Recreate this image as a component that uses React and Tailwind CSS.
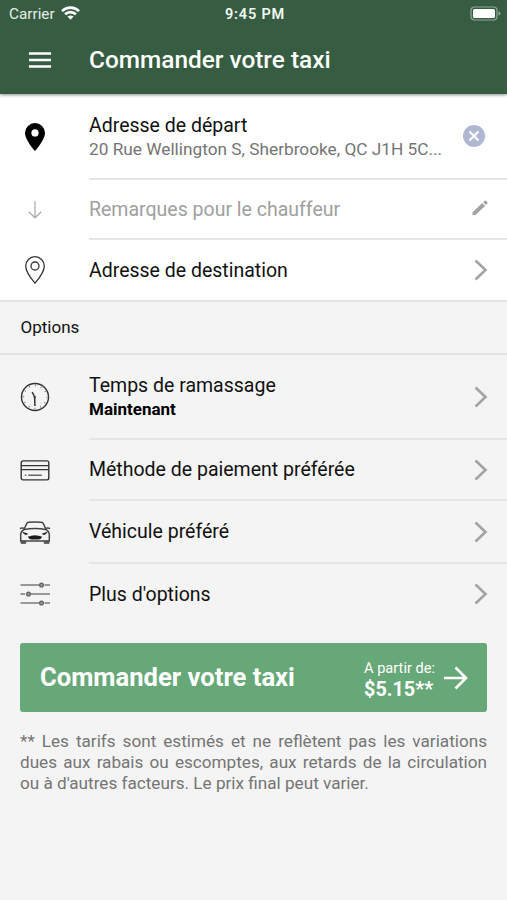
const chevron = (
  <svg width="14" height="22" viewBox="0 0 14 22" fill="none" stroke="#a3a3a3" strokeWidth="2.6">
    <path d="M1.5 1.5 11.5 11 1.5 20.5" />
  </svg>
);

function StatusBar() {
  return (
    <div className="flex h-[28px] items-center text-[15.3px] text-[#e6ede8]">
      <div className="flex flex-1 items-center gap-[6px] pl-[9px]">
        <span>Carrier</span>
        <svg className="mb-[2px]" width="19" height="14" viewBox="0 0 19 14" fill="none" stroke="#fff" strokeWidth="2.7">
          <path d="M1 5.1C5.7.5 13.3.5 18 5.1" />
          <path d="M4.1 8.2c3-2.9 7.8-2.9 10.8 0" />
          <path d="m9.5 13.8-3-3.2c1.7-1.5 4.3-1.5 6 0z" fill="#fff" stroke="none" />
        </svg>
      </div>
      <span className="pt-[2px] text-[14.5px] font-semibold tracking-[0.8px] text-[#f4f8f5]">9:45 PM</span>
      <div className="flex flex-1 justify-end pr-[6px] pb-[2px]">
        <svg width="31" height="15" viewBox="0 0 31 15">
          <rect x="1" y="1" width="26" height="13" rx="3.5" fill="none" stroke="#8fa897" strokeWidth="1.2" />
          <rect x="3" y="3" width="22" height="9" rx="1.5" fill="#fff" />
          <path d="M28.5 5.2v4.6q2-.8 2-2.3t-2-2.3" fill="#8fa897" />
        </svg>
      </div>
    </div>
  );
}

function Header() {
  return (
    <header className="relative h-[94px] bg-[#365d42] shadow-[0_1px_3px_rgba(0,0,0,0.45)]">
      <StatusBar />
      <div className="flex h-[64px] items-center pl-[29px]">
        <svg width="22" height="16" viewBox="0 0 22 16" stroke="#fff" strokeWidth="2.5">
          <path d="M0 1.5h22M0 8h22M0 14.5h22" />
        </svg>
        <h1 className="ml-[38px] text-[24.4px] font-medium text-white">Commander votre taxi</h1>
      </div>
    </header>
  );
}

function Row({ icon, right, height, last, children }) {
  return (
    <div className={`flex ${height}`}>
      <div className="flex w-[70px] items-center justify-center">{icon}</div>
      <div
        className={`ml-[19px] flex min-w-0 flex-1 items-center justify-between pr-[19px] text-[19.5px] leading-[24px] ${
          last ? "" : "border-b-2 border-[#e5e5e5]"
        }`}
      >
        {children}
        {right}
      </div>
    </div>
  );
}

const pinFilled = (
  <svg width="20" height="28" viewBox="0 0 20 28">
    <path
      fillRule="evenodd"
      d="M10 0a10 10 0 0 0-10 10c0 7 10 18 10 18s10-11 10-18A10 10 0 0 0 10 0m0 6.3a3.6 3.6 0 1 1 0 7.2 3.6 3.6 0 0 1 0-7.2"
    />
  </svg>
);

const arrowDown = (
  <svg width="14" height="18" viewBox="0 0 14 18" fill="none" stroke="#aaa" strokeWidth="1.2">
    <path d="M7 0v16.5M.8 10.8 7 16.8l6.2-6" />
  </svg>
);

const pinOutline = (
  <svg width="20" height="28" viewBox="0 0 20 28" fill="none" stroke="#333" strokeWidth="1.3">
    <path d="M10 .7A9.3 9.3 0 0 0 .7 10C.7 16.3 10 27.2 10 27.2S19.3 16.3 19.3 10A9.3 9.3 0 0 0 10 .7z" />
    <circle cx="10" cy="10" r="4" />
  </svg>
);

const clock = (
  <svg className="mb-[2px]" width="30" height="30" viewBox="0 0 30 30" fill="none" stroke="#333">
    <circle cx="15" cy="15" r="13.5" strokeWidth="1.4" />
    <circle cx="15" cy="15" r="11.5" stroke="#666" strokeWidth="1.4" strokeDasharray="0.9 5.121" strokeDashoffset="0.45" />
    <path d="m12.2 10 2.4 5 .4 9" strokeWidth="1.5" />
    <circle cx="14.8" cy="15.2" r="1.1" fill="#333" stroke="none" />
  </svg>
);

const card = (
  <svg width="30" height="21" viewBox="0 0 30 21" fill="none" stroke="#333" strokeWidth="1.4">
    <rect x="1.2" y=".9" width="27.6" height="19" rx="1.8" />
    <path d="M1.2 5.6h27.6M1.2 9.6h27.6" />
    <path d="M4.8 15.2h1.5M8.3 15.2h13.5" stroke="#666" />
  </svg>
);

const car = (
  <svg width="32" height="24" viewBox="0 0 32 24" fill="none" stroke="#444" strokeWidth="1.5">
    <path d="M5 8.5 7.6 2.8Q8.2 1.5 9.8 1.3q6.2-.8 12.4 0 1.6.2 2.2 1.5L27 8.5" />
    <path d="M5 8.5Q16 6.6 27 8.5M4.8 7.2Q2.5 6.4 1 7.6M27.2 7.2q2.3-.8 3.8.4" />
    <path d="M5 8.5Q2 10.3 1.7 13v7h28.6v-7Q30 10.3 27 8.5" />
    <path d="M2 20h4.8v2.5H2zM25.2 20H30v2.5h-4.8z" fill="#555" stroke="#555" strokeWidth=".7" />
    <path d="m4 11.4 4.5 1.5-2.3.7zM28 11.4l-4.5 1.5 2.3.7z" fill="#222" stroke="#222" strokeWidth=".9" />
    <path d="M8.8 15.8q7.2-3 14.4 0-1.4 2.6-3.3 2.6h-7.8q-1.9 0-3.3-2.6" fill="#1a1a1a" stroke="none" />
  </svg>
);

const sliders = (
  <svg width="30" height="24" viewBox="0 0 30 24" fill="none" stroke="#7a7a7a" strokeWidth="1.7">
    <path d="M.5 3H19M24.5 3H30M.5 12H5M11 12H30M.5 21H19M24.5 21H30" />
    <g fill="#aaa" stroke="#666" strokeWidth="1.5">
      <circle cx="21.5" cy="3" r="1.8" />
      <circle cx="8.500" cy="12" r="1.800" />
      <circle cx="21.500" cy="21" r="1.800" />
    </g>
  </svg>
);

const clear = (
  <svg className="mr-[3px]" width="22" height="22" viewBox="0 0 22 22">
    <circle cx="11" cy="11" r="11" fill="#b0b7d2" />
    <path d="m6.5 6.5 9 9M15.5 6.5l-9 9" stroke="#fff" strokeWidth="2.3" />
  </svg>
);

const pencil = (
  <svg className="mb-[2px]" width="16" height="16" viewBox="0 0 16 16" fill="#a3a3a3">
    <path d="M.5 12.3 10.3 3l2.8 2.9-9.7 9.2H.5zM11.2 2.2l1.5-1.4q.7-.6 1.4 0l1.3 1.4q.6.7 0 1.300L14 5z" />
  </svg>
);

function OrderButton() {
  return (
    <button className="flex h-[69px] w-full items-center rounded-[3px] bg-[#67a878] pl-[20px] pr-[19px] text-left text-white">
      <span className="flex-1 text-[25.6px] font-bold">Commander votre taxi</span>
      <span className="flex flex-col pt-[4px]">
        <span className="text-[14.6px] leading-[21px]">A partir de:</span>
        <span className="text-[19.8px] font-bold leading-[22px]">$5.15**</span>
      </span>
      <svg className="ml-[9px]" width="24" height="24" viewBox="0 0 24 24" fill="none" stroke="#fff" strokeWidth="2.6">
        <path d="M0 12h22M11.5 1.5 22 12 11.5 22.5" />
      </svg>
    </button>
  );
}

export default function App() {
  return (
    <div className="h-[900px] w-[507px] overflow-hidden bg-[#f4f4f4] font-['Roboto',sans-serif] text-[#111]">
      <Header />
      <section className="border-b-2 border-[#e3e3e3] bg-white">
        <Row height="h-[86px]" icon={pinFilled} right={clear}>
          <div className="w-[356px] pt-[2px]">
            <div className="pt-[1px] leading-[23px]">Adresse de départ</div>
            <div className="truncate text-[17.25px] text-[#757575]">20 Rue Wellington S, Sherbrooke, QC J1H 5C...</div>
          </div>
        </Row>
        <Row height="h-[60px]" icon={arrowDown} right={pencil}>
          <span className="pt-[2px] text-[#a0a0a0]">Remarques pour le chauffeur</span>
        </Row>
        <Row height="h-[60px]" icon={pinOutline} right={chevron} last>
          <span className="pt-[2px]">Adresse de destination</span>
        </Row>
      </section>

      <h2 className="flex h-[53px] items-center border-b-2 border-[#e3e3e3] pl-[20.5px] text-[17px]">Options</h2>

      <section>
        <Row height="h-[85px]" icon={clock} right={chevron}>
          <div>
            <div className="pt-[1px] leading-[23px]">Temps de ramassage</div>
            <div className="text-[17px] font-bold text-black">Maintenant</div>
          </div>
        </Row>
        <Row height="h-[61px]" icon={card} right={chevron}>
          <span className="pt-[1px]">Méthode de paiement préférée</span>
        </Row>
        <Row height="h-[63px]" icon={car} right={chevron}>
          <span>Véhicule préféré</span>
        </Row>
        <Row height="h-[60px]" icon={sliders} right={chevron} last>
          <span className="pt-[2px]">Plus d'options</span>
        </Row>
      </section>

      <div className="px-[20px] pt-[19px]">
        <OrderButton />
        <p className="mt-[19px] text-justify text-[17.15px] leading-[21px] text-[#757575]">
          ** Les tarifs sont estimés et ne reflètent pas les variations dues aux rabais ou escomptes, aux retards de la
          circulation ou à d'autres facteurs. Le prix final peut varier.
        </p>
      </div>
    </div>
  );
}
